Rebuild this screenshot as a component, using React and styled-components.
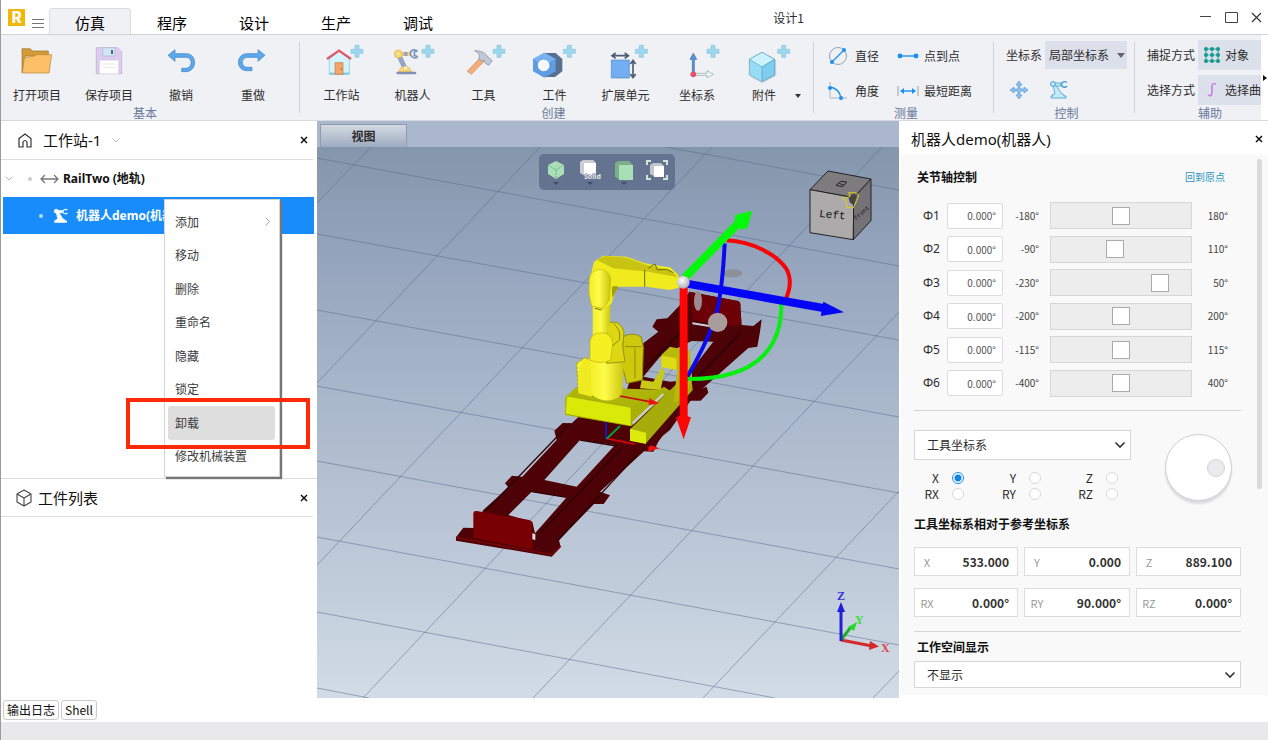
import React, { useState } from 'react';
import styled, { createGlobalStyle, css } from 'styled-components';

const JOINTS = [
    { name: 'Φ1', min: -180, max: 180 },
    { name: 'Φ2', min: -90, max: 110 },
    { name: 'Φ3', min: -230, max: 50 },
    { name: 'Φ4', min: -200, max: 200 },
    { name: 'Φ5', min: -115, max: 115 },
    { name: 'Φ6', min: -400, max: 400 },
]

const POSE = [
    ['X', '533.000'],
    ['Y', '0.000'],
    ['Z', '889.100'],
    ['RX', '0.000°'],
    ['RY', '90.000°'],
    ['RZ', '0.000°'],
]

const MENU_ITEMS = ['添加', '移动', '删除', '重命名', '隐藏', '锁定', '卸载', '修改机械装置']

/* ---------- icons ---------- */

function Plus({ x = 111 }) {
    return (
        <path
            transform={`translate(${x} 22)`}
            d="M-6-18H6V-6H18V6H6V18H-6V6H-18V-6H-6Z"
            fill="#9bd8ef" stroke="#8cc3dc" strokeWidth="2" strokeLinejoin="round"
        />
    )
}

const FolderIcon = () => (
    <BigIcon viewBox="0 0 132 108">
        <path d="M21 14H46L52 21H100V36H30L21 86Z" fill="#d39a35" stroke="#9c742c" strokeWidth="2" />
        <path d="M36 40 58 36 64 32H110L102 87H22L28 42Z" fill="#fbc067" stroke="#b98436" strokeWidth="2" strokeLinejoin="round" />
    </BigIcon>
)

const SaveIcon = () => (
    <BigIcon viewBox="0 0 132 108">
        <path d="M28 11H92L104 24V89H28Z" fill="#dccbef" stroke="#b9aacb" strokeWidth="2" />
        <path d="M47 11H84V36H47Z" fill="#cfe6f5" stroke="#a9b7cd" strokeWidth="2" />
        <path d="M72 18H78V30H72Z" fill="#56657c" />
        <path d="M38 49H94V89H38Z" fill="#fff" stroke="#d7d0e0" strokeWidth="1" />
        <path d="M46 60H86M46 70H86" stroke="#ddd" strokeWidth="2" />
    </BigIcon>
)

const UndoIcon = () => (
    <BigIcon viewBox="0 0 132 108">
        <path d="M27 34 48 17V29H82C115 29 116 83 80 83H68V73H79C102 73 102 40 80 40H48V52Z" fill="#5ba8ec" stroke="#3d7fc4" strokeWidth="2" strokeLinejoin="round" />
    </BigIcon>
)

const RedoIcon = () => (
    <BigIcon viewBox="0 0 132 108">
        <path d="M102 34 81 17V29H48C14 29 14 80 47 80H63V70H50C29 70 28 40 50 40H81V52Z" fill="#5ba8ec" stroke="#3d7fc4" strokeWidth="2" strokeLinejoin="round" />
    </BigIcon>
)

const HouseIcon = () => (
    <BigIcon viewBox="0 0 132 108">
        <path d="M28 44 57 22 88 44V91H28Z" fill="#d5f3fb" stroke="#85c3d6" strokeWidth="2" />
        <path d="M28 86H88V91H28Z" fill="#75c5e4" />
        <path d="M45 56H69V91H45Z" fill="#f5a56b" stroke="#c47746" strokeWidth="2" />
        <path d="M64 73V77" stroke="#8a4b2c" strokeWidth="3" />
        <path d="M21 45 57 20 93 45" fill="none" stroke="#e2566a" strokeWidth="7" />
        <Plus />
    </BigIcon>
)

const ArmIcon = () => (
    <BigIcon viewBox="0 0 132 108">
        <path d="M22 30 42 73" stroke="#96a4c4" strokeWidth="15" />
        <path d="M24 30H60" stroke="#ffd76e" strokeWidth="12" />
        <path d="M38 30H50" stroke="#96a4c4" strokeWidth="12" />
        <path d="M78 20C62 13 54 26 60 35 66 45 78 42 80 38M80 20 70 24V34L80 38" fill="none" stroke="#7d93bd" strokeWidth="5" />
        <circle cx="22" cy="30" r="12" fill="#ffd76e" stroke="#d2ad58" strokeWidth="2" />
        <circle cx="22" cy="30" r="5" fill="#fff4c8" stroke="#c9a351" />
        <path d="M24 84C24 64 56 60 62 84Z" fill="#ffd76e" stroke="#d2ad58" strokeWidth="2" />
        <circle cx="44" cy="73" r="6" fill="#fff4c8" stroke="#c9a351" />
        <rect x="16" y="83" width="60" height="8" rx="4" fill="#8291b1" />
        <Plus />
    </BigIcon>
)

const HammerIcon = () => (
    <BigIcon viewBox="0 0 132 108">
        <path d="M16 82 54 42 65 53 28 91Z" fill="#f5ac77" stroke="#c98556" strokeWidth="2" strokeLinejoin="round" />
        <path d="M38 20C54 20 68 24 75 36L91 50 80 64 68 56 66 48 58 52 50 43C56 33 48 25 38 20Z" fill="#bfc8d4" stroke="#7b8798" strokeWidth="2" strokeLinejoin="round" />
        <Plus />
    </BigIcon>
)

const NutIcon = () => (
    <BigIcon viewBox="0 0 132 108">
        <path d="M36 27H68L88 45V82L66 99H36Z" fill="#58708f" />
        <path d="M34 26 68 45V82L34 101 0 82V45Z" fill="#5e9ce6" />
        <path d="M34 26 68 45 34 64 0 45Z" fill="#79b2f2" />
        <circle cx="32" cy="64" r="19" fill="#f4f7fb" stroke="#4b80c4" strokeWidth="2" />
        <Plus x={109} />
    </BigIcon>
)

const ExtendIcon = () => (
    <BigIcon viewBox="0 0 132 108">
        <path d="M22 48H76V102H22Z" fill="#72aef3" stroke="#5485bd" strokeWidth="2" />
        <path d="M24 35H72M35 27 24 35 35 43M62 27 73 35 62 43M87 50V99M79 60 87 49 95 60M79 90 87 101 95 90" fill="none" stroke="#4d5c74" strokeWidth="5" />
        <Plus x={112} />
    </BigIcon>
)

const FrameIcon = () => (
    <BigIcon viewBox="0 0 132 108">
        <path d="M52 88V46H45L55 28 65 46H58V88Z" fill="#5795dd" stroke="#41659c" strokeWidth="2" />
        <path d="M60 88H96V80L115 91 96 101V94H60Z" fill="#f4fbfa" stroke="#7ca59f" strokeWidth="2" />
        <circle cx="55" cy="91" r="8" fill="#ef4d67" stroke="#b83a50" strokeWidth="1" />
        <Plus x={114} />
    </BigIcon>
)

const PartIcon = () => (
    <BigIcon viewBox="0 0 132 108">
        <path d="M60 29 103 50V96L60 119 26 99Z" fill="#000" opacity=".08" />
        <path d="M60 25 98 46V93L60 113 22 93V46Z" fill="#97dcf6" stroke="#5f9db8" strokeWidth="2" strokeLinejoin="round" />
        <path d="M60 25 98 46 60 69 22 46Z" fill="#c8f2fc" stroke="#5f9db8" strokeWidth="2" strokeLinejoin="round" />
        <path d="M60 69 98 46V93L60 113Z" fill="#7dcdee" stroke="#5f9db8" strokeWidth="2" strokeLinejoin="round" />
        <Plus x={125} />
    </BigIcon>
)

const DiameterIcon = () => (
    <SmallIcon viewBox="0 0 20 20">
        <circle cx="10" cy="10" r="8.500" fill="none" stroke="#8fa3ba" />
        <path d="M4 16 16 4" stroke="#1890f0" strokeWidth="1.300" />
        <circle cx="4" cy="16" r="2" fill="#1890f0" />
        <circle cx="16" cy="4" r="2" fill="#1890f0" />
    </SmallIcon>
)

const AngleIcon = () => (
    <SmallIcon viewBox="0 0 20 20">
        <path d="M2 1V17H19" fill="none" stroke="#a9b5c4" />
        <path d="M2 6C8 7 12 11 13 17" fill="none" stroke="#1890f0" strokeWidth="1.300" />
        <circle cx="2" cy="7" r="2" fill="#1890f0" />
        <circle cx="13" cy="17" r="2" fill="#1890f0" />
    </SmallIcon>
)

const PointsIcon = () => (
    <SmallIcon $w={22} viewBox="0 0 22 20">
        <path d="M3 10H19" stroke="#1890f0" strokeWidth="1.400" />
        <circle cx="3" cy="10" r="2.400" fill="#1890f0" />
        <circle cx="19" cy="10" r="2.400" fill="#1890f0" />
    </SmallIcon>
)

const DistanceIcon = () => (
    <SmallIcon $w={22} viewBox="0 0 22 20">
        <path d="M1 5V15M21 5V15" stroke="#8fa3ba" />
        <path d="M5 10H17" stroke="#1890f0" strokeWidth="1.400" />
        <path d="M3 10 7 7V13ZM19 10 15 7V13Z" fill="#1890f0" />
    </SmallIcon>
)

const MoveIcon = () => (
    <SmallIcon viewBox="0 0 20 20">
        <path d="M10 1 13 5H11V9H15V7L19 10 15 13V11H11V15H13L10 19 7 15H9V11H5V13L1 10 5 7V9H9V5H7Z" fill="#8ec2f2" stroke="#5c98d3" strokeWidth=".7" />
    </SmallIcon>
)

const RobotIcon = ({ fill = '#c3ebfb', stroke = '#3f9fd0', size = 20 }) => (
    <SmallIcon $w={size} viewBox="0 0 20 20">
        <path d="M3 15 6 14 4 5H7L12 13 15 15V16H17V18H2V16H4Z" fill={fill} stroke={stroke} strokeWidth=".8" />
        <path d="M5 3H12V6H6Z" fill={fill} stroke={stroke} strokeWidth=".8" />
        <circle cx="4" cy="4" r="2.400" fill={fill} stroke={stroke} />
        <path d="M18 2.500C15 .500 12 2.500 12.500 5 13 7.500 16.500 8 18 6" fill="none" stroke={stroke} strokeWidth="1.400" />
    </SmallIcon>
)

const SnapIcon = () => (
    <SmallIcon $w={18} viewBox="0 0 18 18">
        <path d="M3 3H15V15H3ZM9 3V15M3 9H15M1 3H17M1 15H17M3 1V17M15 1V17" fill="none" stroke="#5fbcae" />
        {[3, 9, 15].map(x => [3, 9, 15].map(y => (
            <circle key={`${x}-${y}`} cx={x} cy={y} r="2" fill="#17988f" />
        )))}
    </SmallIcon>
)

const CurveIcon = () => (
    <SmallIcon $w={18} viewBox="0 0 18 18">
        <path d="M5 14C8 16 9 14 9 11V6C9 3 10 2 13 3" fill="none" stroke="#c07be0" strokeWidth="1.500" />
    </SmallIcon>
)

const Chevron = ({ color = '#333' }) => (
    <ChevronSvg width="12" height="8" viewBox="0 0 12 8" aria-hidden="true">
        <path d="M1.500 1.500 6 6 10.500 1.500" fill="none" stroke={color} strokeWidth="1.600" />
    </ChevronSvg>
)

const CloseX = ({ size = 8 }) => (
    <svg width={size} height={size} viewBox="0 0 8 8" aria-hidden="true">
        <path d="M1 1 7 7M7 1 1 7" stroke="#111" strokeWidth="1.500" />
    </svg>
)

/* ---------- 3d view ---------- */

function Scene() {
    return (
        <SceneSvg viewBox="317 147 582 551" preserveAspectRatio="xMidYMid slice">
            <defs>
                <linearGradient id="sky" x1="0" y1="0" x2="0" y2="1">
                    <stop offset="0" stopColor="#8496ac" />
                    <stop offset=".17" stopColor="#92a2bb" />
                    <stop offset=".45" stopColor="#a9b7cb" />
                    <stop offset=".78" stopColor="#c0cbda" />
                    <stop offset="1" stopColor="#d2dce7" />
                </linearGradient>
                <linearGradient id="body" x1="0" y1="0" x2="1" y2="0">
                    <stop offset="0" stopColor="#f3ef25" />
                    <stop offset=".45" stopColor="#fffb4a" />
                    <stop offset="1" stopColor="#c9c40d" />
                </linearGradient>
                <radialGradient id="ball" cx=".4" cy=".35" r=".7">
                    <stop offset="0" stopColor="#fff" />
                    <stop offset="1" stopColor="#a8a8b4" />
                </radialGradient>
            </defs>
            <rect x="317" y="147" width="582" height="551" fill="url(#sky)" />
            <path
                d="M666 147 899 190M317 158 899 266M317 234 899 340M317 310 899 417M317 386 899 493M317 461 899 569M317 537 899 645M317 612 775 698M317 688 369 698
                M371 147 317 203M540 147 317 383M712 147 317 565M882 147 363 698M899 312 533 698M899 491 703 698M899 671 873 698"
                fill="none" stroke="#5b6c8a" strokeWidth=".7" opacity=".75"
            />

            {/* rail, lower half */}
            <g transform="translate(440 380) scale(.33333)">
                <path
                    fillRule="evenodd"
                    fill="#4c0206"
                    d="M48 472 70 443 100 444 130 390 205 322 195 310 216 287 247 290 350 180 343 152 368 129 395 130 470 60 700 60 800 20 805 38 782 62 745 62 655 185 640 215 612 214 480 335 510 346 491 372 462 372 357 480 362 502 335 530 48 482Z
                    M205 405 277 425 285 460 380 352 275 335Z
                    M313 300 410 320 525 195 420 180Z"
                />
                <path d="M140 390 390 130M300 460 545 205M355 480 600 215M420 180 530 198M275 335 380 352" stroke="#2d0104" strokeWidth="4" fill="none" />
                <path d="M48 472 335 524 362 498" stroke="#740509" strokeWidth="5" fill="none" />
                <path d="M100 400Q101 391 110 393L268 420Q277 423 277 432V508L100 474Z" fill="#780004" />
                <path d="M277 460 286 462V480L277 478Z" fill="#d9dde4" />
                <path d="M498 175 650 205" stroke="#d8000c" strokeWidth="5" />
                <path d="M625 193 658 205 625 215Z" fill="#f01010" />
                <path d="M498 178V110" stroke="#1717b5" strokeWidth="6" />
                <path d="M500 176 540 138" stroke="#0b9b37" strokeWidth="6" />
            </g>

            <g transform="translate(440 190) scale(.33333)">
                {/* rail, upper half */}
                <path
                    fillRule="evenodd"
                    fill="#4c0206"
                    d="M610 460 655 425 637 410 650 388 682 385 720 345 748 305 893 333Q904 337 901 350L905 405 940 408 965 388 960 425 952 470 925 474 760 620 690 720 590 800 560 600Z
                    M755 453 820 455 750 545 745 570 690 575 610 560 660 500Z"
                />
                <path d="M750 306 893 333Q902 337 901 350L904 398 890 410 760 390Z" fill="#6c0006" />
                <path d="M757 400 850 415" stroke="#c9ced8" strokeWidth="6" />
                <path d="M745 590 900 430M610 540 720 430" stroke="#2d0104" strokeWidth="5" />

                {/* carriage */}
                <path d="M376 622 408 592 690 600 575 708 375 675Z" fill="#aeb50a" />
                <path d="M380 618 573 652 573 708 376 672Z" fill="#d9ea08" stroke="#9ba500" strokeWidth="2" />
                <path d="M573 652 672 590 690 602 575 706Z" fill="#a9b109" />
                <path d="M570 718 752 540 758 600 618 760 570 752Z" fill="#a6ac0b" />
                <path d="M570 716 618 728 618 762 570 752Z" fill="#dceb0c" />
                <path d="M578 700 670 612" stroke="#c6cdd8" strokeWidth="7" />
                <path d="M664 495 690 470 750 482 756 560 740 620 700 640 712 540 664 530Z" fill="#b9b90b" />
                <path d="M664 497 710 505 710 540 664 532Z" fill="#deda15" />
                <path d="M664 535 674 540 662 600 600 595 605 570 640 575Z" fill="#c9c918" />

                {/* rear motor */}
                <path d="M550 440Q575 425 603 440L610 470 607 570 560 580 545 520Z" fill="#cfc90e" stroke="#908e05" strokeWidth="3" />
                <path d="M555 470H605M585 475V565" stroke="#8f8b08" strokeWidth="3" />

                {/* robot */}
                <path d="M410 520 440 500 450 600 415 605Z" fill="#f5f12a" stroke="#a9a508" strokeWidth="3" strokeDasharray="8 4" />
                <path d="M448 505 552 515 546 615Q500 650 452 612Z" fill="url(#body)" />
                <path d="M430 515 450 505 456 620 415 610V550Z" fill="#efeb20" />
                <path d="M500 400Q540 385 552 425L548 470 555 515 500 520Z" fill="#ddd714" stroke="#98940b" strokeWidth="3" />
                <path d="M520 400Q545 420 538 450L515 470" fill="none" stroke="#8f8b0a" strokeWidth="3" />
                <path d="M458 350 512 330 510 400 500 430 458 440Z" fill="url(#body)" />
                <path d="M450 455Q452 430 485 428 515 428 518 460L512 510Q480 525 450 510Z" fill="#f5f022" stroke="#b3ae0c" strokeWidth="2" />
                <path d="M456 240 462 215 490 197 560 200 610 218 640 225 690 232 715 255 725 290 690 300 620 290 530 290 515 340 490 360 455 348 447 300Z" fill="#efeb1c" />
                <path d="M470 210 495 198 560 203 620 225 690 240 715 262 625 245 520 235Z" fill="#c9c411" />
                <path d="M448 265Q452 238 485 238 512 245 512 270L508 330 490 355 455 348 447 310Z" fill="url(#body)" stroke="#bdb90c" strokeWidth="2" />
                <path d="M516 290Q530 285 535 292L516 325Z" fill="#a5a10a" />
                <path d="M614 240V290M625 235 645 222 652 240 680 238 700 248M465 355 485 360" fill="none" stroke="#6d6a06" strokeWidth="3" />
                <path d="M540 618 640 637" stroke="#c8080c" strokeWidth="5" />
                <path d="M628 625 658 640 626 646Z" fill="#f01010" />

                {/* jog gizmo */}
                <ellipse cx="877" cy="250" rx="30" ry="12" fill="#8d9096" />
                <ellipse cx="774" cy="333" rx="12" ry="30" fill="#9b8a8e" />
                <path d="M854 160Q846 330 820 400T742 560" fill="none" stroke="#0a0af0" strokeWidth="12" />
                <circle cx="833" cy="397" r="29" fill="#a99c9c" />
                <path d="M860 151C940 155 1010 195 1038 235Q1062 275 1036 330" fill="none" stroke="#f50505" strokeWidth="12" />
                <path d="M1024 340C1026 460 965 570 740 567" fill="none" stroke="#05f010" strokeWidth="12" />
                <path d="M735 262 895 100" stroke="#05f80a" strokeWidth="24" />
                <path d="M934 64 888 76 884 100 905 118 922 112Z" fill="#05f80a" stroke="#05f80a" strokeWidth="3" />
                <path d="M740 281 1150 354" stroke="#0505f5" strokeWidth="24" />
                <path d="M1150 335 1212 367 1142 378Z" fill="#0505f5" />
                <path d="M731 285V690" stroke="#fb0505" strokeWidth="24" />
                <path d="M708 682Q731 672 753 682L731 748Z" fill="#fb0505" />
                <circle cx="730" cy="277" r="19" fill="url(#ball)" />
            </g>

            {/* view cube */}
            <g transform="translate(520 120) scale(.33333)" stroke="#222" strokeWidth="3" strokeLinejoin="round">
                <path d="M870 209 924 153 1053 177 1001 233Z" fill="#7d7b7e" />
                <path d="M870 209 1001 233 1000 359 870 338Z" fill="#adaaab" />
                <path d="M1001 233 1053 177V302L1000 359Z" fill="#747276" />
                <path d="M985 232 1003 220 1010 230 1001 255 990 248Z" fill="#444" stroke="none" />
                <path d="M966 236 990 230 986 218H1005L1016 225 1010 242 1000 264 980 262V244Z" fill="none" stroke="#d8d01c" />
                <path d="M948 196 962 184 980 186 968 200ZM958 190 972 196" fill="none" />
            </g>
            <ViewText x="819" y="217" fontSize="11" transform="rotate(5 819 217)">Left</ViewText>
            <ViewText x="856" y="220" fontSize="6" transform="rotate(-40 856 220)">Front</ViewText>

            {/* axes */}
            <path d="M841 640 872 646" stroke="#d42a2a" strokeWidth="3" />
            <path d="M870 641 879 646.500 869 650Z" fill="#d42a2a" />
            <path d="M841 640 851 627" stroke="#1fae24" strokeWidth="3" />
            <path d="M857 622 854 631 848 627Z" fill="#2ad82c" />
            <path d="M841 641V610" stroke="#2020d8" strokeWidth="3" />
            <path d="M841 602 845 612H837Z" fill="#2020d8" />
            <AxisText x="837" y="600" fill="#3535e0">Z</AxisText>
            <AxisText x="855" y="624" fill="#3ae03c">Y</AxisText>
            <AxisText x="881" y="652" fill="#e04545">X</AxisText>
        </SceneSvg>
    )
}

function ViewToolbar() {
    return (
        <ViewTools>
            <ViewTool aria-label="视角">
                <svg width="20" height="30" viewBox="-1 0 20 30">
                    <path d="M9 1 17 5V14L9 19 1 14V5Z" fill="#a8dfb4" />
                    <path d="M9 10V19M1 5 9 10 17 5" fill="none" stroke="#5b9c77" strokeWidth=".8" strokeDasharray="2 1" />
                    <path d="M6 22H12L9 25Z" fill="#3f4b60" />
                </svg>
            </ViewTool>
            <ViewTool aria-label="显示">
                <svg width="24" height="30" viewBox="0 0 24 30">
                    <path d="M2 2 5 0H15L18 3V16H7L2 13Z" fill="#c9cdd0" />
                    <path d="M6 3H18V16H6Z" fill="#fff" />
                    <ToolText x="6" y="19">Solid</ToolText>
                    <path d="M9 22H15L12 25Z" fill="#3f4b60" />
                </svg>
            </ViewTool>
            <ViewTool aria-label="渲染">
                <svg width="20" height="30" viewBox="0 0 20 30">
                    <path d="M1 3 4 1H15L19 5V20H6L1 17Z" fill="#7cae8d" />
                    <path d="M5 5H19V20H5Z" fill="#a8dfb4" />
                    <path d="M7 22H13L10 25Z" fill="#3f4b60" />
                </svg>
            </ViewTool>
            <ViewTool aria-label="适应窗口">
                <svg width="22" height="30" viewBox="0 0 22 30">
                    <path d="M1 5V1H5M17 1H21V5M21 15V19H17M5 19H1V15" fill="none" stroke="#cfe6d2" strokeWidth="2" />
                    <path d="M4 5 7 3H15L18 6V16H8L4 14Z" fill="#c3c7cc" />
                    <path d="M8 6H18V17H8Z" fill="#fff" />
                </svg>
            </ViewTool>
        </ViewTools>
    )
}

/* ---------- page parts ---------- */

function TitleBar() {
    const tabs = ['仿真', '程序', '设计', '生产', '调试']
    const [active, setActive] = useState(0);

    return (
        <Title>
            <Logo>R</Logo>
            <IconButton aria-label="菜单">
                <svg width="12" height="9" viewBox="0 0 12 9">
                    <path d="M0 .5H12M0 4.500H12M0 8.500H12" stroke="#777" />
                </svg>
            </IconButton>
            <Tabs>
                {tabs.map((t, i) => (
                    <Tab key={t} $active={i === active} onClick={() => setActive(i)}>{t}</Tab>
                ))}
            </Tabs>
            <DocName>设计1</DocName>
            <WindowButtons>
                <IconButton aria-label="最小化">
                    <svg width="12" height="12" viewBox="0 0 12 12"><path d="M0 5.500H11" stroke="#444" /></svg>
                </IconButton>
                <IconButton aria-label="最大化">
                    <svg width="13" height="12" viewBox="0 0 13 12"><path d="M.5 1.500H12.500V11.500H.5Z" fill="none" stroke="#444" /></svg>
                </IconButton>
                <IconButton aria-label="关闭">
                    <svg width="11" height="11" viewBox="0 0 11 11"><path d="M1 1 10 10M10 1 1 10" stroke="#333" strokeWidth="1.200" /></svg>
                </IconButton>
            </WindowButtons>
        </Title>
    )
}

function RibbonBar() {
    return (
        <Ribbon>
            <Group $pad="0 11px 0 0">
                <GroupRow>
                    <BigButton $w={72}><FolderIcon />打开项目</BigButton>
                    <BigButton $w={72}><SaveIcon />保存项目</BigButton>
                    <BigButton $w={72}><UndoIcon />撤销</BigButton>
                    <BigButton $w={72}><RedoIcon />重做</BigButton>
                </GroupRow>
                <GroupName>基本</GroupName>
            </Group>
            <Group $pad="0 13px 0 6px">
                <GroupRow>
                    <BigButton $w={71}><HouseIcon />工作站</BigButton>
                    <BigButton $w={71}><ArmIcon />机器人</BigButton>
                    <BigButton $w={71}><HammerIcon />工具</BigButton>
                    <BigButton $w={71}><NutIcon />工件</BigButton>
                    <BigButton $w={71}><ExtendIcon />扩展单元</BigButton>
                    <BigButton $w={72}><FrameIcon />坐标系</BigButton>
                    <BigButton $w={62}><PartIcon />附件</BigButton>
                    <MoreButton aria-label="更多">
                        <svg width="6" height="4" viewBox="0 0 6 4"><path d="M0 0H6L3 4Z" fill="#333" /></svg>
                    </MoreButton>
                </GroupRow>
                <GroupName>创建</GroupName>
            </Group>
            <Group $pad="0 22px 0 14px">
                <MeasureGrid>
                    <SmallButton><DiameterIcon />直径</SmallButton>
                    <SmallButton $gap={5}><PointsIcon />点到点</SmallButton>
                    <SmallButton><AngleIcon />角度</SmallButton>
                    <SmallButton $gap={5}><DistanceIcon />最短距离</SmallButton>
                </MeasureGrid>
                <GroupName $shift>测量</GroupName>
            </Group>
            <Group $pad="0 8px 0 12px">
                <ControlRows>
                    <ControlRow>
                        <label htmlFor="frame">坐标系</label>
                        <FrameSelect>
                            <select id="frame" defaultValue="局部坐标系">
                                <option>局部坐标系</option>
                                <option>世界坐标系</option>
                            </select>
                            <svg width="8" height="5" viewBox="0 0 8 5"><path d="M0 0H8L4 5Z" fill="#666" /></svg>
                        </FrameSelect>
                    </ControlRow>
                    <ControlRow $icons>
                        <IconButton aria-label="移动"><MoveIcon /></IconButton>
                        <IconButton aria-label="机器人控制"><RobotIcon /></IconButton>
                    </ControlRow>
                </ControlRows>
                <GroupName>控制</GroupName>
            </Group>
            <Group $last $pad="0 0 0 12px">
                <ControlRows>
                    <ControlRow>
                        捕捉方式
                        <ModeButton><SnapIcon />对象</ModeButton>
                    </ControlRow>
                    <ControlRow>
                        选择方式
                        <ModeButton><CurveIcon />选择曲线</ModeButton>
                    </ControlRow>
                </ControlRows>
                <GroupName $shift>辅助</GroupName>
            </Group>
            <Overflow aria-label="展开">
                <svg width="4" height="6" viewBox="0 0 4 6"><path d="M0 0 4 3 0 6Z" fill="#111" /></svg>
            </Overflow>
        </Ribbon>
    )
}

function ContextMenu() {
    return (
        <Menu>
            {MENU_ITEMS.map(item => (
                <MenuItem key={item} $current={item === '卸载'}>
                    {item}
                    {item === '添加' && (
                        <svg width="5" height="9" viewBox="0 0 5 9"><path d="M.5 .5 4.500 4.500 .5 8.500" fill="none" stroke="#aaa" /></svg>
                    )}
                    {item === '卸载' && <Marker />}
                </MenuItem>
            ))}
        </Menu>
    )
}

function LeftPanel() {
    return (
        <Left>
            <Station>
                <PanelHead $h={39}>
                    <svg width="14" height="15" viewBox="0 0 14 15">
                        <path d="M1 5.500 7 1 13 5.500V14H9V9Q7 6 5 9V14H1Z" fill="none" stroke="#333" strokeWidth="1.200" />
                    </svg>
                    <h2>工作站-1</h2>
                    <Faint width="8" height="5" viewBox="0 0 8 5"><path d="M.5 .5 4 4 7.500 .5" fill="none" stroke="#aaa" /></Faint>
                    <IconButton aria-label="关闭工作站"><CloseX /></IconButton>
                </PanelHead>
                <TreeRow>
                    <Faint width="8" height="5" viewBox="0 0 8 5"><path d="M.5 .5 4 4 7.500 .5" fill="none" stroke="#aaa" /></Faint>
                    <Bullet />
                    <svg width="19" height="10" viewBox="0 0 19 10">
                        <path d="M1 5H18M5 1 1 5 5 9M14 1 18 5 14 9" fill="none" stroke="#777" strokeWidth="1.300" />
                    </svg>
                    <span>RailTwo (地轨)</span>
                </TreeRow>
                <TreeRow $selected>
                    <Bullet $light />
                    <RobotIcon fill="#fff" stroke="#fff" size={16} />
                    <span>机器人demo(机器人)</span>
                </TreeRow>
                <ContextMenu />
            </Station>
            <Parts>
                <PanelHead $h={38}>
                    <svg width="16" height="18" viewBox="0 0 16 18">
                        <path d="M8 1 15 5V13L8 17 1 13V5ZM1 5 8 9 15 5M8 9V17" fill="none" stroke="#444" strokeWidth="1.100" strokeLinejoin="round" />
                    </svg>
                    <h2>工件列表</h2>
                    <IconButton aria-label="关闭工件列表"><CloseX /></IconButton>
                </PanelHead>
            </Parts>
        </Left>
    )
}

function RightPanel() {
    const [axis, setAxis] = useState('X');

    return (
        <Right>
            <RightHead>
                <h2>机器人demo(机器人)</h2>
                <IconButton aria-label="关闭属性"><CloseX /></IconButton>
            </RightHead>
            <RightBody>
                <Props>
                    <SectionHead>
                        <h3>关节轴控制</h3>
                        <a href="#home">回到原点</a>
                    </SectionHead>
                    <Joints>
                        {JOINTS.map(j => (
                            <Joint key={j.name}>
                                <label htmlFor={j.name}>{j.name}</label>
                                <JointInput id={j.name} defaultValue="0.000°" />
                                <Limit>{j.min}°</Limit>
                                <JointRange type="range" aria-label={j.name} min={j.min} max={j.max} defaultValue={0} />
                                <Limit>{j.max}°</Limit>
                            </Joint>
                        ))}
                    </Joints>
                    <Jog>
                        <div>
                            <SelectBox $h={30}>
                                <select aria-label="参考坐标系" defaultValue="工具坐标系">
                                    <option>工具坐标系</option>
                                    <option>基坐标系</option>
                                </select>
                                <Chevron />
                            </SelectBox>
                            <Axes>
                                {['X', 'Y', 'Z', 'RX', 'RY', 'RZ'].map(a => (
                                    <AxisLabel key={a}>
                                        <span>{a}</span>
                                        <input type="radio" name="axis" checked={axis === a} onChange={() => setAxis(a)} />
                                    </AxisLabel>
                                ))}
                            </Axes>
                        </div>
                        <Dial aria-label="点动旋钮"><i /></Dial>
                    </Jog>
                    <h3>工具坐标系相对于参考坐标系</h3>
                    <PoseGrid>
                        {POSE.map(([name, value]) => (
                            <PoseField key={name}>
                                <span>{name}</span>
                                <input defaultValue={value} />
                            </PoseField>
                        ))}
                    </PoseGrid>
                    <Workspace>
                        <label htmlFor="workspace">工作空间显示</label>
                        <SelectBox $h={27}>
                            <select id="workspace" defaultValue="不显示">
                                <option>不显示</option>
                                <option>显示</option>
                            </select>
                            <Chevron />
                        </SelectBox>
                    </Workspace>
                </Props>
                <ScrollThumb />
            </RightBody>
        </Right>
    )
}

function App() {
    return (
        <Page>
            <GlobalStyle />
            <TitleBar />
            <RibbonBar />
            <Main>
                <LeftPanel />
                <View>
                    <ViewTabs><ViewTab>视图</ViewTab></ViewTabs>
                    <Canvas>
                        <Scene />
                        <ViewToolbar />
                    </Canvas>
                </View>
                <RightPanel />
            </Main>
            <Bottom>
                <BottomTab>输出日志</BottomTab>
                <BottomTab>Shell</BottomTab>
            </Bottom>
            <Status />
        </Page>
    )
}

export default App

const GlobalStyle = createGlobalStyle`
    *{
        box-sizing: border-box;
    }

    body{
        margin: 0;
        background: #fff;
        color: #2c2c2c;
        font: 12px/16px "Noto Sans CJK SC", "Noto Sans", sans-serif;
    }

    button, input, select{
        font: inherit;
        color: inherit;
        margin: 0;
    }

    button{
        border: 0;
        padding: 0;
        background: none;
        cursor: pointer;
        white-space: nowrap;
    }

    h2, h3{
        margin: 0;
    }

    h2{
        font: 400 15px/20px "Noto Sans", "Noto Sans CJK SC", sans-serif;
        color: #111;
    }

    h3{
        font-size: 12px;
        line-height: 16px;
        font-weight: 700;
        color: #111;
    }

    svg{
        display: block;
        flex: none;
    }
`

const Page = styled.div`
    min-height: 100vh;
    display: flex;
    flex-direction: column;
    border-left: 1px solid #9a9a9a;
`

const IconButton = styled.button`
    display: flex;
    align-items: center;
    justify-content: center;
`

const Title = styled.header`
    height: 34px;
    display: flex;
    align-items: center;
    padding-left: 7px;
`

const Logo = styled.div`
    width: 17px;
    height: 17px;
    margin-right: 7px;
    background: #f2b705;
    color: #fff;
    font-weight: 900;
    font-size: 15px;
    line-height: 16px;
    text-align: center;

    & + button{
        margin-right: 5px;
        padding-top: 12px;
    }
`

const Tabs = styled.nav`
    display: flex;
    align-self: flex-end;
`

const Tab = styled.button`
    width: 82px;
    height: 26px;
    border: 1px solid transparent;
    border-bottom: 0;
    border-radius: 4px 4px 0 0;
    font-size: 15px;
    color: #000;
    padding-top: 2px;

    ${props => props.$active && css`
        background: #f0f1f5;
        border-color: #d9dbe2;
    `}
`

const DocName = styled.div`
    flex: 1;
    padding-top: 2px;
    text-align: center;
`

const WindowButtons = styled.div`
    width: 150px;
    padding-right: 6px;
    display: flex;
    align-items: center;
    justify-content: flex-end;
    gap: 13px;
`

const Ribbon = styled.div`
    height: 87px;
    display: flex;
    background: #f0f1f5;
    border-top: 1px solid #d0d2d8;
    border-bottom: 1px solid #d5d9e2;
    overflow: hidden;
`

const Group = styled.section`
    display: flex;
    flex-direction: column;
    padding: ${props => props.$pad};
    flex: none;
    background: linear-gradient(#cdd3dd, #cdd3dd) right 7px / 1px 71px no-repeat;

    ${props => props.$last && css`
        background: none;
        flex: 1 1 0;
        min-width: 0;
        overflow: hidden;
    `}
`

const GroupRow = styled.div`
    height: 71px;
    display: flex;
`

const GroupName = styled.div`
    line-height: 14px;
    text-align: center;
    color: #68789a;
    padding-left: ${props => props.$shift ? '12px' : '0'};
`

const BigButton = styled.button`
    width: ${props => props.$w}px;
    padding-top: 9px;
    display: flex;
    flex-direction: column;
    align-items: center;
    gap: 7px;
`

const BigIcon = styled.svg`
    width: 44px;
    height: 36px;
    overflow: visible;
`

const SmallIcon = styled.svg`
    width: ${props => props.$w || 20}px;
    height: ${props => props.$w < 20 ? props.$w : 20}px;
`

const MoreButton = styled.button`
    padding-top: 50px;
`

const MeasureGrid = styled.div`
    height: 71px;
    padding-top: 3px;
    display: grid;
    grid-template-columns: 69px 75px;
    grid-template-rows: 35px 35px;
`

const SmallButton = styled.button`
    display: flex;
    align-items: center;
    gap: ${props => props.$gap || 7}px;
`

const ControlRows = styled.div`
    height: 71px;
    padding-top: 5px;
    display: flex;
    flex-direction: column;
    gap: 5px;
`

const ControlRow = styled.div`
    height: 30px;
    display: flex;
    align-items: center;
    gap: ${props => props.$icons ? 20 : 3}px;
    padding-left: ${props => props.$icons ? 3 : 0}px;
    white-space: nowrap;
`

const FrameSelect = styled.div`
    display: flex;
    align-items: center;
    width: 82px;
    height: 28px;
    background: #dce0ea;

    select{
        appearance: none;
        border: 0;
        background: none;
        padding: 0 0 0 4px;
        width: 72px;
    }
`

const ModeButton = styled.button`
    flex: 1;
    min-width: 0;
    height: 30px;
    padding-left: 5px;
    display: flex;
    align-items: center;
    gap: 4px;
    background: #dce0ea;
    overflow: hidden;
`

const Overflow = styled.button`
    width: 7px;
    background: #fff;
    display: flex;
    align-items: center;
    justify-content: center;
`

const Main = styled.main`
    flex: 1;
    display: flex;
`

const Left = styled.aside`
    width: 316px;
    flex: none;
    display: flex;
    flex-direction: column;
`

const Station = styled.section`
    position: relative;
    height: 357px;
`

const Parts = styled.section`
    flex: 1;
    border-top: 1px solid #dcdcdc;
`

const PanelHead = styled.div`
    display: flex;
    align-items: center;
    gap: 11px;
    height: ${props => props.$h}px;
    margin-right: 4px;
    padding: 0 5px 0 17px;
    border-bottom: 1px solid #dcdcdc;

    button{
        margin-left: auto;
    }

    ${Parts} &{
        padding-left: 15px;
        gap: 6px;
    }
`

const Faint = styled.svg`
    opacity: .8;
`

const TreeRow = styled.div`
    height: 37px;
    display: flex;
    align-items: center;
    padding-left: 4px;
    font: 700 12px/16px "Noto Sans", "Noto Sans CJK SC", sans-serif;
    color: #111;
    white-space: nowrap;

    span{
        margin-left: 4px;
    }

    ${props => props.$selected && css`
        margin: 0 3px 0 2px;
        padding-left: 21px;
        background: #188cfb;
        color: #fff;

        span{
            margin-left: 7px;
        }
    `}
`

const Bullet = styled.i`
    width: 4px;
    height: 4px;
    border-radius: 50%;
    margin: 0 8px 0 15px;
    background: ${props => props.$light ? '#b7dcff' : '#ccc'};

    & + ${SmallIcon}{
        margin-left: 2px;
    }
`

const Menu = styled.div`
    position: absolute;
    left: 163px;
    top: 78px;
    z-index: 2;
    width: 116px;
    height: 278px;
    padding: 5px 3px 3px;
    display: grid;
    grid-auto-rows: 1fr;
    background: #fff;
    border: 1px solid #d4d4d4;
    box-shadow: 2px 2px 1px #777;
`

const MenuItem = styled.button`
    position: relative;
    display: flex;
    align-items: center;
    justify-content: space-between;
    padding: 0 5px 0 7px;
    margin-right: 1px;
    border-radius: 3px;
    color: #3a3a3a;
    background: ${props => props.$current ? '#dedede' : 'none'};
`

const Marker = styled.i`
    position: absolute;
    inset: -8px -35px -9px -42px;
    border: 4px solid #ff2a05;
    z-index: 1;
`

const View = styled.section`
    flex: 1;
    min-width: 0;
    display: flex;
    flex-direction: column;
`

const ViewTabs = styled.div`
    height: 26px;
    padding: 3px 3px 0;
    background: #abb7cd;
`

const ViewTab = styled.button`
    width: 87px;
    height: 23px;
    border: 1px solid #8e9bb1;
    border-bottom: 0;
    background: linear-gradient(#d3d9e2, #9eacc0);
    font-weight: 700;
`

const Canvas = styled.div`
    position: relative;
    flex: 1;
    background: #a9b7cb;
`

const SceneSvg = styled.svg`
    position: absolute;
    inset: 0;
    width: 100%;
    height: 100%;
`

const ViewText = styled.text`
    font-family: "Liberation Mono", monospace;
    fill: #111;
`

const AxisText = styled.text`
    font: 700 12px "Liberation Serif", serif;
`

const ToolText = styled.text`
    font: 700 7px "Noto Sans", sans-serif;
    fill: #e5e8ee;
    stroke: #64738f;
    stroke-width: 1px;
    paint-order: stroke;
`

const ViewTools = styled.div`
    position: absolute;
    top: 7px;
    left: 222px;
    height: 36px;
    padding: 6px 7px 0;
    display: flex;
    gap: 12px;
    border-radius: 5px;
    background: #64738f;
`

const ViewTool = styled.button`
    height: 30px;
`

const Right = styled.aside`
    width: 369px;
    flex: none;
`

const RightHead = styled.div`
    height: 34px;
    display: flex;
    align-items: center;
    justify-content: space-between;
    padding: 2px 5px 0 12px;
`

const RightBody = styled.div`
    display: flex;
    justify-content: space-between;
    margin-left: 2px;
    padding: 4px 6px 7px 13px;
    background: #f9f9fa;
`

const ScrollThumb = styled.div`
    width: 5px;
    height: 330px;
    border-radius: 3px;
    background: #dadada;
`

const Props = styled.div`
    width: 327px;
`

const SectionHead = styled.div`
    display: flex;
    align-items: center;
    justify-content: space-between;
    padding: 10px 16px 17px 3px;

    a{
        font-size: 10px;
        color: #2796bd;
        text-decoration: none;
    }
`

const Joints = styled.div`
    height: 209px;
    padding-bottom: 13px;
    display: grid;
    gap: 6px;
    border-bottom: 1px solid #d5d5d8;
`

const Joint = styled.div`
    display: grid;
    grid-template-columns: 24px 56px 36px 153px 36px;
    align-items: center;
    padding-left: 9px;

    label{
        font-family: "Noto Sans", "Noto Sans CJK SC", sans-serif;
    }
`

const JointInput = styled.input`
    width: 56px;
    height: 26px;
    padding: 0 6px;
    border: 1px solid #dcdce0;
    border-radius: 2px;
    background: #fff;
    font-size: 10px;
    text-align: right;
    color: #555;
`

const Limit = styled.span`
    font-size: 10px;
    text-align: right;
    color: #444;
`

const JointRange = styled.input`
    appearance: none;
    width: 142px;
    height: 27px;
    border: 1px solid #d6d6d8;
    background: #ededee;
    justify-self: end;

    &::-webkit-slider-thumb{
        appearance: none;
        width: 18px;
        height: 18px;
        border: 1px solid #aaa;
        background: #fff;
    }
`

const Jog = styled.div`
    display: flex;
    justify-content: space-between;
    padding: 19px 9px 14px 0;
`

const SelectBox = styled.div`
    position: relative;
    width: 100%;
    min-width: 217px;
    height: ${props => props.$h}px;

    select{
        appearance: none;
        width: 100%;
        height: 100%;
        padding: 0 12px;
        border: 1px solid #d6d6da;
        border-radius: 0;
        background: #fff;
    }
`

const ChevronSvg = styled.svg`
    position: absolute;
    right: 5px;
    top: 50%;
    margin-top: -4px;
    pointer-events: none;
`

const Axes = styled.div`
    display: grid;
    grid-template-columns: repeat(3, 77px);
    margin-top: 10px;
    width: 217px;
`

const AxisLabel = styled.label`
    display: flex;
    align-items: center;
    gap: 13px;
    height: 16px;

    span{
        width: 25px;
        text-align: right;
    }

    input{
        appearance: none;
        width: 12px;
        height: 12px;
        border: 1px solid #d8d8dc;
        border-radius: 50%;
        background: #fff;
    }

    input:checked{
        border-color: #1890f0;
        background: radial-gradient(#1583e0 0 3px, #fff 4px);
    }
`

const Dial = styled.button`
    width: 67px;
    height: 67px;
    margin-top: 4px;
    padding-left: 35px;
    border: 1px solid #cfcfd2;
    border-radius: 50%;
    background: #fff;
    box-shadow: 0 3px 2px #dcdcde;

    i{
        display: block;
        width: 18px;
        height: 18px;
        margin-left: 6px;
        border: 1px solid #d2d2d4;
        border-radius: 50%;
        background: #ebebed;
    }
`

const PoseGrid = styled.div`
    display: grid;
    grid-template-columns: 104px 106px 105px;
    gap: 12px 6px;
    padding: 15px 0 14px;
    border-bottom: 1px solid #d5d5d8;
`

const PoseField = styled.label`
    display: flex;
    align-items: center;
    height: 29px;
    border: 1px solid #dcdce0;
    background: #fff;

    span{
        width: 24px;
        text-align: center;
        font-size: 11px;
        color: #999;
    }

    input{
        flex: 1;
        min-width: 0;
        border: 0;
        padding: 0 8px 0 0;
        background: none;
        text-align: right;
        font-weight: 700;
        color: #333;
    }
`

const Workspace = styled.div`
    label{
        display: block;
        padding: 7px 3px 6px;
        font-weight: 700;
        color: #111;
    }
`

const Bottom = styled.div`
    height: 24px;
    display: flex;
    gap: 2px;
    padding: 2px 2px;
`

const BottomTab = styled.button`
    height: 20px;
    padding: 0 3px;
    border: 1px solid #cfc9cf;
    border-radius: 3px;
    background: #fcfcfc;
    color: #111;
`

const Status = styled.footer`
    height: 18px;
    background: #e9e8ea;
`
